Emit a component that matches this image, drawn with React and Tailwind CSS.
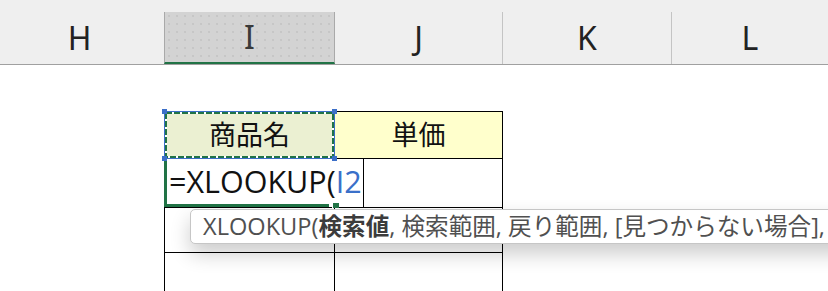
export default function App() {
  const latin = { fontFamily: '"Noto Sans", "Noto Sans CJK JP", sans-serif' };
  const jp = { fontFamily: '"Noto Sans CJK JP", "Noto Sans", sans-serif' };
  const mixed = { fontFamily: '"Open Sans", "Noto Sans CJK JP", sans-serif' };
  return (
    <div className="relative w-[828px] h-[291px] overflow-hidden bg-white">
      {/* column header */}
      <div className="h-[12px] bg-[#efefef]" />
      <div
        className="flex h-[53px] bg-[#efefef] border-b border-[#a0a0a0] text-[32px] leading-none text-[#222]"
        style={latin}
      >
        <div className="w-[164px] flex items-center justify-center pr-[5px]">H</div>
        <div className="w-[171px] flex items-center justify-center border-l border-r border-[#a9a9a9] border-b-[2px] border-b-[#217346] bg-[#d3d3d3] bg-[radial-gradient(circle,#c2c2c2_0.6px,transparent_1px)] bg-[length:8px_8px] text-[#3a3a3a]">
          I
        </div>
        <div className="w-[168px] flex items-center justify-center border-r border-[#c4c4c4]">J</div>
        <div className="w-[169px] flex items-center justify-center border-r border-[#c4c4c4]">K</div>
        <div className="flex-1 flex items-center justify-center">L</div>
      </div>

      {/* table */}
      <div className="ml-[164px] mt-[46px] w-[339px]">
        <div className="grid grid-cols-[169px_167px] grid-rows-[46px_48px_44px_60px] gap-px p-px bg-black">
          <div className="relative bg-[#ebf0d2] flex items-center justify-center text-[27px] text-[#111]" style={jp}>
            <span className="pb-[1px]">商品名</span>
            <svg
              className="absolute left-[-1px] top-[-1px] overflow-visible z-20"
              width="171"
              height="48"
            >
              <rect x="0.5" y="0.5" width="170" height="47" fill="none" stroke="#3c6fc8" strokeWidth="1" />
              <rect x="2" y="2" width="167" height="44" fill="none" stroke="#ffffff" strokeWidth="2" />
              <rect x="2" y="2" width="167" height="44" fill="none" stroke="#217346" strokeWidth="2" strokeDasharray="6 2" />
              <rect x="-2" y="-2" width="5" height="5" fill="#3c6fc8" />
              <rect x="168" y="-2" width="5" height="5" fill="#3c6fc8" />
              <rect x="-2" y="45" width="5" height="5" fill="#3c6fc8" />
              <rect x="168" y="45" width="5" height="5" fill="#3c6fc8" />
            </svg>
          </div>
          <div className="bg-[#ffffcc] flex items-center justify-center text-[27px] text-[#111]" style={jp}>
            <span className="pb-[1px]">単価</span>
          </div>

          <div className="relative bg-white">
            <div
              className="absolute left-[-1px] top-0 z-10 w-[200px] h-[48px] bg-white border-l-[3px] border-[#217346] border-r border-r-black flex items-center pl-[2px] pb-[3px] text-[30.5px] leading-none text-[#111] whitespace-nowrap"
              style={mixed}
            >
              <span>=XLOOKUP(</span>
              <span className="text-[#3a70c9]">I2</span>
              <div className="absolute left-[-3px] bottom-0 w-[165px] h-[3px] bg-[#217346]" />
              <div className="absolute left-[165px] bottom-[-1px] w-[7px] h-[5px] bg-[#217346] border-l border-white" />
            </div>
          </div>
          <div className="bg-white" />

          <div className="bg-white" />
          <div className="bg-white" />
          <div className="bg-white" />
          <div className="bg-white" />
        </div>
      </div>

      {/* tooltip */}
      <div
        className="absolute left-[190px] top-[209px] h-[35px] w-[700px] rounded-[5px] border border-[#c6c6c6] bg-white shadow-[0_10px_20px_rgba(0,0,0,0.2)] flex items-center pl-[12px] text-[23.6px] leading-none text-[#505050] whitespace-nowrap"
        style={mixed}
      >
        <span>XLOOKUP(</span>
        <span className="font-bold text-[#3c3c3c]">検索値</span>
        <span>, 検索範囲, 戻り範囲, [見つからない場合],</span>
      </div>
    </div>
  );
}
